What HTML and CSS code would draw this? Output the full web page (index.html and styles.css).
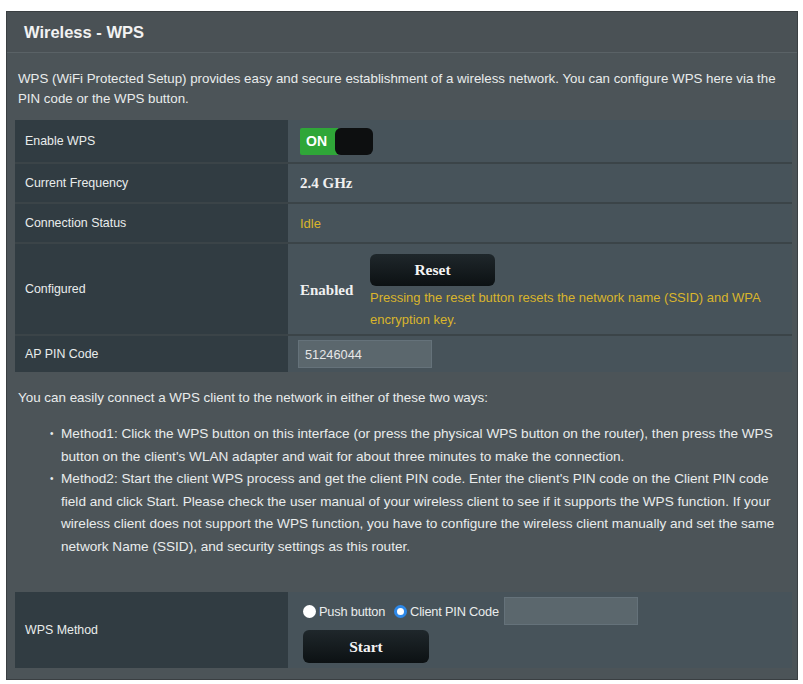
FILE: index.html
```html
<!DOCTYPE html>
<html>
<head>
    <title>Wireless - WPS</title>
    <link rel="stylesheet" href="styles.css">
</head>
<body>
<div class="panel">
    <div class="title">Wireless - WPS</div>
    <p class="intro">WPS (WiFi Protected Setup) provides easy and secure establishment of a wireless network. You can configure WPS here via the PIN code or the WPS button.</p>

    <table class="grid">
        <tr class="r1">
            <th>Enable WPS</th>
            <td><span class="toggle"><span class="on">ON</span><span class="knob"></span></span></td>
        </tr>
        <tr class="r2">
            <th>Current Frequency</th>
            <td class="strong">2.4 GHz</td>
        </tr>
        <tr class="r2">
            <th>Connection Status</th>
            <td class="warn">Idle</td>
        </tr>
        <tr class="r3">
            <th>Configured</th>
            <td>
                <div class="cfg">
                    <span class="strong">Enabled</span>
                    <div class="cfg-right">
                        <button class="btn">Reset</button>
                        <div class="warn note">Pressing the reset button resets the network name (SSID) and WPA encryption key.</div>
                    </div>
                </div>
            </td>
        </tr>
        <tr class="r4">
            <th>AP PIN Code</th>
            <td><input class="field pin" type="text" value="51246044"></td>
        </tr>
    </table>

    <p class="lead">You can easily connect a WPS client to the network in either of these two ways:</p>
    <ul class="ways">
        <li>Method1: Click the WPS button on this interface (or press the physical WPS button on the router), then press the WPS button on the client's WLAN adapter and wait for about three minutes to make the connection.</li>
        <li>Method2: Start the client WPS process and get the client PIN code. Enter the client's PIN code on the Client PIN code field and click Start. Please check the user manual of your wireless client to see if it supports the WPS function. If your wireless client does not support the WPS function, you have to configure the wireless client manually and set the same network Name (SSID), and security settings as this router.</li>
    </ul>

    <table class="grid method">
        <tr>
            <th>WPS Method</th>
            <td>
                <div class="radios">
                    <span class="radio white"></span><span class="rlabel">Push button</span>
                    <span class="radio blue"></span><span class="rlabel">Client PIN Code</span>
                    <input class="field client" type="text" value="">
                </div>
                <button class="btn start">Start</button>
            </td>
        </tr>
    </table>
</div>
</body>
</html>
```

FILE: styles.css
```css
* { box-sizing: border-box; }
html, body { margin: 0; padding: 0; background: #fff; }
body { font-family: "Liberation Sans", Arial, sans-serif; font-size: 13px; color: #e9ecec; }

.panel { width: 792px; height: 669px; margin: 11px 0 0 6px; background: #4c5458; border: 1px solid #3a3f42; padding: 0 7px 0 8px; }
.title { height: 41px; line-height: 40px; font-size: 16.5px; font-weight: bold; color: #f2f2f2; border-bottom: 1px solid #5a6266; margin: 0 -7px 0 -8px; padding-left: 17px; background: #4a5155; }
.intro { margin: 0; padding: 16px 2px 11px 3px; line-height: 20px; font-size: 13.3px; }

.grid { width: 777px; border-collapse: collapse; }
.grid th { width: 273px; background: #313c42; text-align: left; font-weight: normal; font-size: 12.4px; padding: 0 0 0 10px; border-bottom: 2px solid #3b4448; }
.grid td { background: #47535a; padding: 0 0 0 12px; border-bottom: 2px solid #3b4448; }
.r1 { height: 43px; }
.r2 { height: 40px; }
.r3 { height: 92px; }
.r4 { height: 37px; }
.grid tr:last-child th, .grid tr:last-child td { border-bottom: none; }

.toggle { display: inline-flex; height: 27px; width: 73px; vertical-align: middle; margin-top: 1px; }
.on { width: 38px; background: #2fa638; color: #fff; font-weight: bold; font-size: 14px; line-height: 27px; padding-left: 6px; border-radius: 2px 0 0 2px; }
.knob { flex: 1; background: #0d0f10; border-radius: 6px; margin-left: -3px; }

.strong { font-family: "Liberation Serif", "Times New Roman", serif; font-weight: bold; font-size: 15px; color: #f0f0f0; }
.warn { color: #d9b52c; font-size: 13px; }

.cfg { display: flex; align-items: center; }
.cfg .strong { width: 70px; margin-top: 2px; }
.cfg-right { padding-top: 6px; }
.note { line-height: 22px; width: 420px; margin-top: 1px; }

.btn { display: block; width: 125px; height: 32px; border: none; border-radius: 6px; background: linear-gradient(#1f272b, #0c1113); color: #f4f4f4; font-family: "Liberation Serif", "Times New Roman", serif; font-weight: bold; font-size: 15.5px; }

.field { height: 28px; border: 1px solid #65727a; background: #5b676d; color: #e6e6e6; font-family: "Liberation Sans", Arial, sans-serif; font-size: 12.8px; padding: 0 0 0 6px; }
.pin { width: 134px; margin-left: -2px; }

.lead { margin: 0; padding: 16px 0 0 3px; line-height: 20px; font-size: 13.4px; }
.ways { margin: 15px 0 0 0; padding: 0 6px 0 46px; line-height: 22.5px; font-size: 13.6px; list-style: none; }
.ways li { position: relative; }
.ways li::before { content: "\2022"; position: absolute; left: -11px; font-size: 10px; }

.method { margin-top: 34px; }
.method tr { height: 76px; }
.method th { border-bottom: none; }
.method td { border-bottom: none; padding-left: 15px; }
.radios { display: flex; align-items: center; height: 28px; }
.radio { width: 13px; height: 13px; border-radius: 50%; margin-right: 3px; flex: none; }
.radio.white { background: #fff; }
.radio.blue { background: #fff; border: 3px solid #2d88e8; margin-left: 9px; }
.rlabel { font-size: 12.8px; letter-spacing: -0.2px; }
.client { width: 134px; margin-left: 5px; }
.start { margin-top: 5px; width: 126px; height: 33px; }
```
